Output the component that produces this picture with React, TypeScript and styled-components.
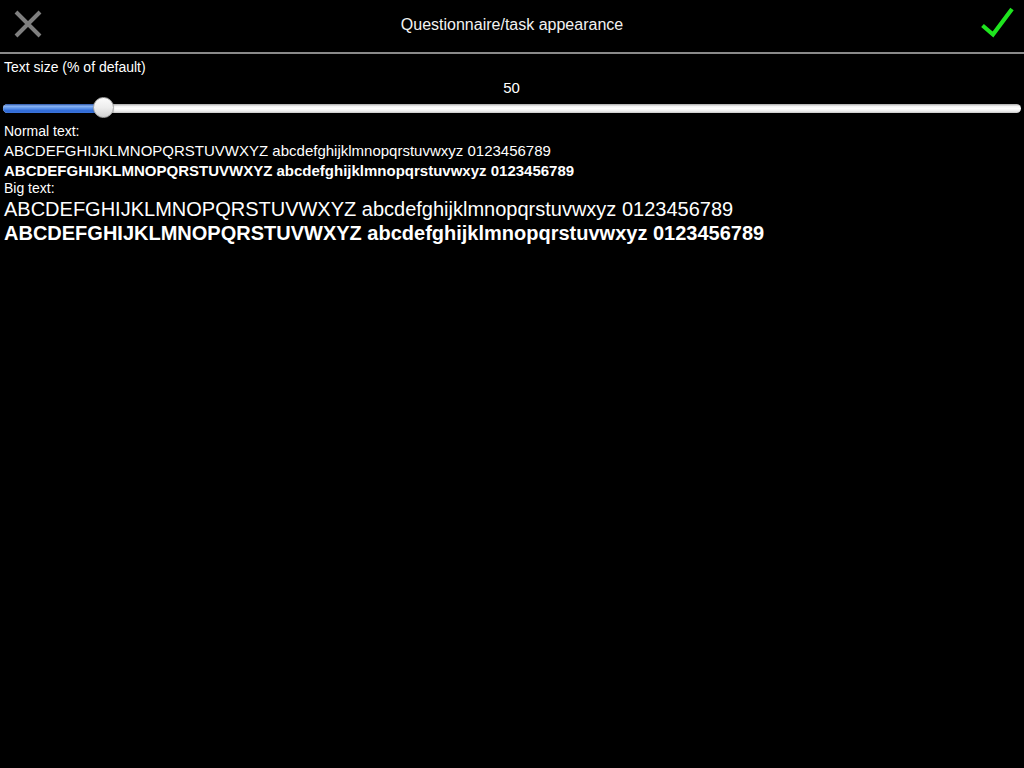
import React from 'react'
import styled, { createGlobalStyle } from 'styled-components'

const GlobalStyle = createGlobalStyle`
  html, body {
    margin: 0;
    padding: 0;
    background: #000;
  }
  body {
    font-family: "Liberation Sans", Helvetica, Arial, sans-serif;
    color: #fff;
  }
`

const Page = styled.div`
  width: 1024px;
  height: 768px;
  background: #000;
  overflow: hidden;
`

const Header = styled.header`
  height: 52px;
  border-bottom: 2px solid #8a8a8a;
  display: flex;
  align-items: stretch;
`

const IconButton = styled.div`
  width: 56px;
  flex: 0 0 56px;
  display: flex;
  align-items: flex-start;
`

const Title = styled.h1`
  flex: 1;
  margin: 0 0 3px;
  align-self: center;
  text-align: center;
  font-size: 16px;
  line-height: 19px;
  font-weight: normal;
  color: #f2f2f2;
`

const Content = styled.main`
  padding: 5px 0 0 4px;
`

const Label = styled.div<{ $gap?: number }>`
  font-size: 14px;
  line-height: 16px;
  margin-top: ${({ $gap }) => $gap ?? 0}px;
`

const Value = styled.div`
  font-size: 15px;
  line-height: 18px;
  margin-top: 4px;
  text-align: center;
  padding-right: 5px;
`

const SliderRow = styled.div`
  position: relative;
  height: 22px;
  margin-left: -4px;
  padding: 0 3px;
  display: flex;
  align-items: center;
`

const Track = styled.div`
  position: relative;
  flex: 1;
  height: 9px;
  border-radius: 5px;
  background: linear-gradient(
    to bottom,
    #a9a9a9 0%,
    #f4f4f4 25%,
    #ffffff 50%,
    #ececec 80%,
    #c4c4c4 100%
  );
  overflow: hidden;
`

const Fill = styled.div<{ $width: number }>`
  width: ${({ $width }) => $width}px;
  height: 100%;
  background: linear-gradient(
    to bottom,
    #2a55a8 0%,
    #8ab4f4 25%,
    #5a92ea 50%,
    #2f6ad8 75%,
    #3c74d8 100%
  );
`

const Thumb = styled.div<{ $left: number }>`
  position: absolute;
  top: 0;
  left: ${({ $left }) => $left}px;
  width: 21px;
  height: 21px;
  border-radius: 50%;
  border: 1px solid #a8a8a8;
  box-sizing: border-box;
  background: linear-gradient(to bottom, #fbfbfb 0%, #ededed 50%, #d2d2d2 100%);
  box-shadow: 0 1px 1px rgba(0, 0, 0, 0.4);
`

const SampleText = styled.div<{ $big?: boolean; $bold?: boolean; $gap?: number }>`
  font-size: ${({ $big }) => ($big ? 20 : 15)}px;
  line-height: ${({ $big }) => ($big ? 24 : 20)}px;
  font-weight: ${({ $bold }) => ($bold ? 'bold' : 'normal')};
  margin-top: ${({ $gap }) => $gap ?? 0}px;
  white-space: nowrap;
`

const SAMPLE = 'ABCDEFGHIJKLMNOPQRSTUVWXYZ abcdefghijklmnopqrstuvwxyz 0123456789'

const CloseIcon = () => (
  <svg width="56" height="52" viewBox="0 0 56 52">
    <path d="M16 12 L40 36 M40 12 L16 36" stroke="#7f7f7f" strokeWidth="4" />
  </svg>
)

const CheckIcon = () => (
  <svg width="56" height="52" viewBox="0 0 56 52">
    <path
      d="M14.5 25.5 L25 34.5 L44 9"
      stroke="#1fe41f"
      strokeWidth="4.2"
      fill="none"
      strokeLinejoin="miter"
    />
  </svg>
)

const App: React.FC = () => {
  return (
    <Page>
      <GlobalStyle />
      <Header>
        <IconButton>
          <CloseIcon />
        </IconButton>
        <Title>Questionnaire/task appearance</Title>
        <IconButton>
          <CheckIcon />
        </IconButton>
      </Header>
      <Content>
        <Label>Text size (% of default)</Label>
        <Value>50</Value>
        <SliderRow>
          <Track>
            <Fill $width={100} />
          </Track>
          <Thumb $left={93} />
        </SliderRow>
        <Label $gap={4}>Normal text:</Label>
        <SampleText $gap={2}>{SAMPLE}</SampleText>
        <SampleText $bold>{SAMPLE}</SampleText>
        <Label $gap={-1}>Big text:</Label>
        <SampleText $big $gap={1}>
          {SAMPLE}
        </SampleText>
        <SampleText $big $bold>
          {SAMPLE}
        </SampleText>
      </Content>
    </Page>
  )
}

export default App
